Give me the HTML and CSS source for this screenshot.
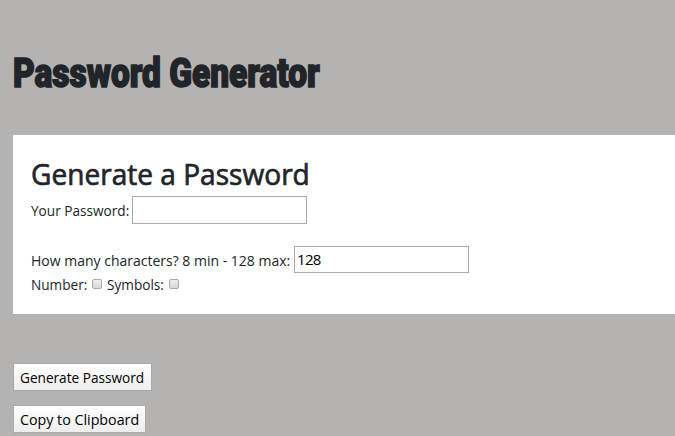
FILE: index.html
```html
<!DOCTYPE html>
<html lang="en">
<head>
<meta charset="utf-8">
<title>Password Generator</title>
<link rel="stylesheet" href="styles.css">
</head>
<body>
<h1><span class="text title">Password Generator</span></h1>
<main class="card">
  <h2><span class="text heading">Generate a Password</span></h2>
  <div class="row first"><label class="label your" for="pw"><span class="text narrow">Your Password:</span></label><input class="field" id="pw" type="text"></div>
  <div class="row second"><label class="label many" for="len"><span class="text long">How many characters? 8 min - 128 max:</span></label><input class="field short" id="len" type="text" value="128"></div>
  <div class="row checks"><label class="label number" for="num"><span class="text narrow">Number:</span></label><input class="check" id="num" type="checkbox"><label class="label symbols" for="sym"><span class="text narrow">Symbols:</span></label><input class="check" id="sym" type="checkbox"></div>
</main>
<div class="actions">
  <button class="btn generate" type="button"><span class="text narrow">Generate Password</span></button>
  <button class="btn copy" type="button"><span class="text wide">Copy to Clipboard</span></button>
</div>
</body>
</html>
```
FILE: styles.css
```css
* { box-sizing: border-box; }
body {
  margin: 0;
  height: 436px;
  padding: 50px 0 0 13px;
  overflow: hidden;
  background: #b5b3b2;
  color: #212529;
  font: 15px/24px "Open Sans", "Noto Sans", sans-serif;
}
h1, h2 { margin: 0; white-space: nowrap; }
h1 { height: 85px; font: 900 40px/48px Impact, "Roboto", sans-serif; }
.text { display: inline-block; transform-origin: 0 50%; }
.title { transform: scaleX(.836); -webkit-text-stroke: 1.6px #212529; }
.card { height: 179px; padding: 20px 18px 0; background: #fff; }
h2 { height: 41px; font: 500 30px/38px "Open Sans", sans-serif; }
.heading { transform: scaleX(.936); -webkit-text-stroke: .7px #212529; }
.narrow { transform: scaleX(.908); }
.long { transform: scaleX(.933); }
.wide { transform: scaleX(.95); }
.row { display: flex; align-items: center; white-space: nowrap; }
.first { height: 28px; }
.second { height: 27px; margin-top: 22px; }
.checks { height: 24px; margin-top: -1px; }
.label { flex: none; }
.your { width: 101px; }
.many { width: 263px; padding-top: 1px; }
.number { width: 61px; }
.symbols { width: 62px; margin-left: 5px; }
.field { width: 175px; height: 28px; padding: 0 2px 2px; border: 1px solid #a9a9a9; background: #fff; color: #000; font: inherit; letter-spacing: -.7px; }
.short { height: 27px; }
.check { appearance: none; flex: none; width: 10px; height: 10px; margin: 0; border: 1px solid #aaa; border-radius: 2px; background: linear-gradient(#eee, #d9d9d9); }
.actions { display: flex; flex-direction: column; align-items: flex-start; gap: 14px; padding-top: 49px; }
.btn { height: 28px; padding: 0 6px; border: 1px solid #aaa; background: linear-gradient(#fff, #eee); color: #000; font: inherit; text-align: left; white-space: nowrap; }
.generate { width: 139px; }
.copy { width: 133px; }
```
